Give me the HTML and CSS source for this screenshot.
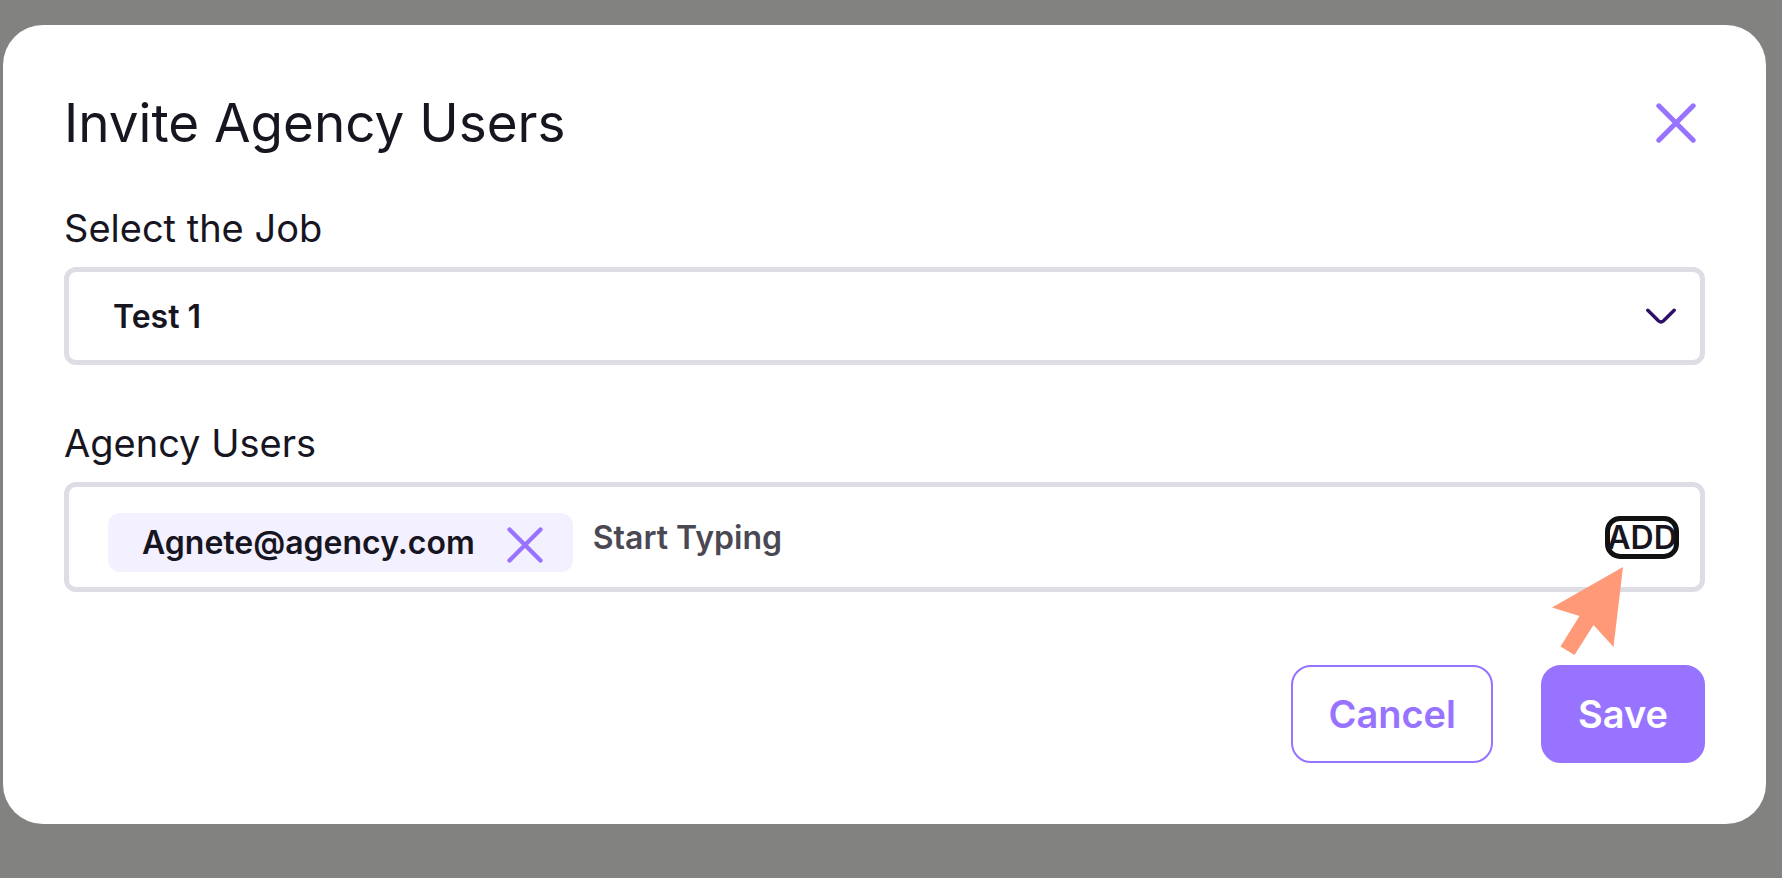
FILE: index.html
```html
<!DOCTYPE html>
<html lang="en">
<head>
    <meta charset="UTF-8">
    <meta name="viewport" content="width=device-width, initial-scale=1.0">
    <title>Invite Agency Users</title>
    <link rel="stylesheet" href="styles.css">
</head>
<body>
    <form class="modal" role="dialog" aria-labelledby="modalTitle">
        <div class="modal-header">
            <h1 class="modal-title" id="modalTitle">Invite Agency Users</h1>
            <button class="icon-button modal-close" type="button" aria-label="Close">
                <svg class="close-icon" viewBox="0 0 40 40" fill="none" stroke="currentColor" stroke-width="5" stroke-linecap="round">
                    <path d="M2.8 2.8 37.2 37.2M37.2 2.8 2.8 37.2"></path>
                </svg>
            </button>
        </div>

        <div class="field">
            <label class="field-label" for="job">Select the Job</label>
            <div class="select-box">
                <select class="select-input" id="job">
                    <option>Test 1</option>
                </select>
                <svg class="chevron" viewBox="0 0 30 16" fill="none" stroke="currentColor" stroke-width="3.4" stroke-linecap="round" stroke-linejoin="round">
                    <path d="M1.8 2.2 12.4 12.8Q15 15.2 17.6 12.8L28.2 2.2"></path>
                </svg>
            </div>
        </div>

        <div class="field">
            <label class="field-label" for="users">Agency Users</label>
            <div class="users-box">
                <span class="chip">
                    Agnete@agency.com
                    <button class="icon-button chip-remove" type="button" aria-label="Remove Agnete@agency.com">
                        <svg class="close-icon" viewBox="0 0 40 40" fill="none" stroke="currentColor" stroke-width="4.8" stroke-linecap="round">
                            <path d="M2.8 2.8 37.2 37.2M37.2 2.8 2.8 37.2"></path>
                        </svg>
                    </button>
                </span>
                <input class="users-input" id="users" type="text" placeholder="Start Typing">
                <div class="add-wrap">
                    <button class="add-button" type="button">ADD</button>
                    <svg class="pointer" viewBox="0 0 71 98" fill="currentColor">
                        <path d="M71 0 61.5 80 41.5 58 22.5 88 8.5 79.5 27.5 49 0 40.5Z"></path>
                    </svg>
                </div>
            </div>
        </div>

        <div class="actions">
            <button class="button button-outline" type="button">Cancel</button>
            <button class="button button-primary" type="submit">Save</button>
        </div>
    </form>
</body>
</html>
```
FILE: styles.css
```css
* {
    box-sizing: border-box;
}

body {
    margin: 0;
    padding: 25px 16px 24px 3px;
    background-color: #828280;
    color: #17151f;
    font-family: Inter, sans-serif;
    font-size: 32px;
}

button, input, select {
    margin: 0;
    font-family: inherit;
    font-size: inherit;
    color: inherit;
}

button {
    cursor: pointer;
}

.modal {
    padding: 66px 61px 61px;
    background-color: white;
    border-radius: 40px;
}

.modal-header {
    display: flex;
    align-items: center;
    justify-content: space-between;
    margin-bottom: 49px;
}

.modal-title {
    margin: 0;
    font-size: 53px;
    font-weight: 400;
    line-height: 64px;
}

.icon-button {
    display: flex;
    padding: 0;
    border: none;
    background: none;
    color: #9873ff;
}

.modal-close {
    width: 40px;
    margin-right: 9px;
}

.close-icon {
    width: 100%;
}

/* form fields */
.field {
    margin-bottom: 54px;
}

.field-label {
    display: block;
    margin-bottom: 15px;
    font-size: 38px;
    line-height: 48px;
}

.select-box {
    display: grid;
    align-items: center;
}

.select-input, .chevron {
    grid-area: 1 / 1;
}

.select-input {
    width: 100%;
    height: 98px;
    padding: 0 44px;
    border: 5px solid #dedde5;
    border-radius: 12px;
    background-color: white;
    font-weight: 600;
    appearance: none;
}

.chevron {
    justify-self: end;
    width: 30px;
    margin-right: 29px;
    color: #2e0f66;
    pointer-events: none;
}

.users-box {
    display: flex;
    align-items: center;
    height: 110px;
    padding: 0 21px 0 39px;
    border: 5px solid #dedde5;
    border-radius: 12px;
    font-weight: 600;
}

.chip {
    display: flex;
    align-items: center;
    gap: 32px;
    height: 59px;
    margin-top: 10px;
    padding: 0 30px 0 34px;
    border-radius: 12px;
    background-color: #f3f0ff;
}

.chip-remove {
    width: 36px;
    margin-top: 6px;
}

.users-input {
    flex: 1;
    min-width: 0;
    margin-left: 20px;
    padding: 0;
    border: none;
    outline: none;
    background: none;
    font-weight: 600;
}

.users-input::placeholder {
    color: #4a4853;
    opacity: 1;
}

.add-wrap {
    position: relative;
}

.add-button {
    display: flex;
    align-items: center;
    justify-content: center;
    width: 74px;
    height: 43px;
    padding: 0;
    border: 5px solid #111;
    border-radius: 15px;
    background: none;
    font-weight: 600;
}

/* arrow pointing at the add button */
.pointer {
    position: absolute;
    top: 51px;
    right: 56px;
    width: 71px;
    color: #ff9978;
    pointer-events: none;
}

.actions {
    display: flex;
    justify-content: flex-end;
    gap: 48px;
    margin-top: 73px;
}

.button {
    height: 98px;
    padding: 0 35px;
    border: 2px solid #9873ff;
    border-radius: 20px;
    font-size: 38px;
    font-weight: 600;
}

.button-outline {
    background-color: white;
    color: #9873ff;
}

.button-primary {
    background-color: #9873ff;
    color: white;
}
```
